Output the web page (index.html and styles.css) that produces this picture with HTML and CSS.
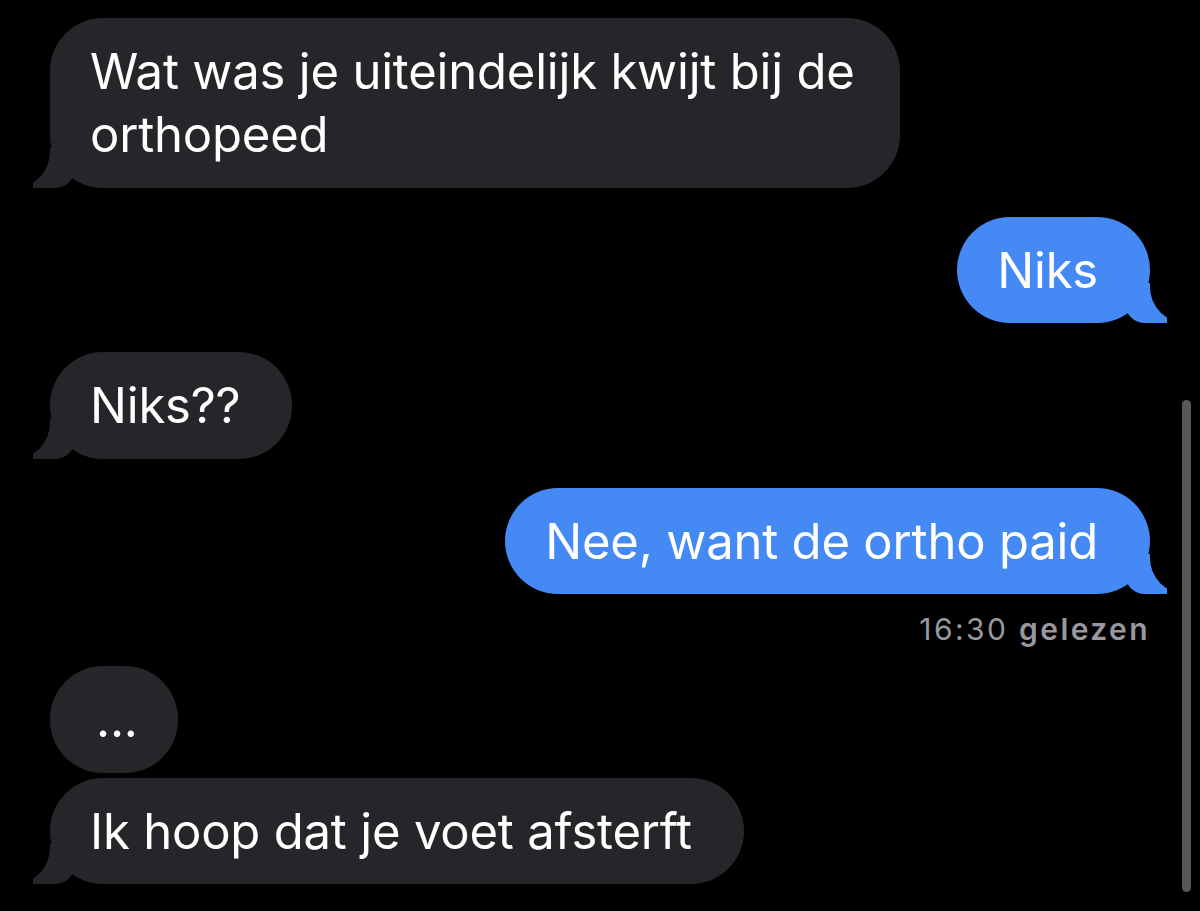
FILE: index.html
```html
<!DOCTYPE html>
<html lang="nl">
<head>
    <meta charset="UTF-8">
    <meta name="viewport" content="width=device-width, initial-scale=1.0">
    <title>Berichten</title>
    <link rel="stylesheet" href="styles.css">
</head>
<body>
    <div class="chat">
        <div class="bubble received first multi">Wat was je uiteindelijk kwijt bij de orthopeed</div>

        <div class="bubble sent">Niks</div>

        <div class="bubble received">Niks??</div>

        <div class="bubble sent">Nee, want de ortho paid</div>
        <div class="receipt">16:30 <b>gelezen</b></div>

        <div class="bubble received no-tail dots">...</div>
        <div class="bubble received close">Ik hoop dat je voet afsterft</div>
    </div>

    <div class="scrollbar"></div>
</body>
</html>
```

FILE: styles.css
```css
body {
    margin: 0;
    padding: 0;
    background-color: #000;
    font-family: Inter, "Noto Sans", sans-serif;
    color: #fff;
    height: 911px;
    overflow: hidden;
}

.chat {
    display: flex;
    flex-direction: column;
    padding: 18px 50px 0 50px;
}

.bubble {
    position: relative;
    box-sizing: border-box;
    max-width: 850px;
    padding: 22px 52px 21.5px 40px;
    border-radius: 53px;
    font-size: 49px;
    line-height: 63px;
    letter-spacing: -0.2px;
    margin-top: 29px;
}

.bubble.multi {
    padding-right: 38px;
}

.bubble.first {
    margin-top: 0;
}

.bubble.close {
    margin-top: 5px;
}

.received {
    align-self: flex-start;
    background-color: #262529;
}

.sent {
    align-self: flex-end;
    background-color: #4589f4;
}

/* tails */
.bubble::before,
.bubble::after {
    content: "";
    position: absolute;
    bottom: 0;
    height: 40px;
}

.received::before {
    left: -17px;
    width: 42px;
    background-color: #262529;
    border-bottom-right-radius: 20px;
}

.received::after {
    left: -36px;
    width: 36px;
    background-color: #000;
    border-bottom-right-radius: 36px;
}

.sent::before {
    right: -17px;
    width: 42px;
    background-color: #4589f4;
    border-bottom-left-radius: 20px;
}

.sent::after {
    right: -36px;
    width: 36px;
    background-color: #000;
    border-bottom-left-radius: 36px;
}

.no-tail::before,
.no-tail::after {
    display: none;
}

.dots {
    padding-left: 46px;
    padding-right: 40px;
    margin-top: 20px;
}

.receipt {
    align-self: flex-end;
    margin-top: 18px;
    font-size: 30px;
    line-height: 34px;
    letter-spacing: 2.4px;
    color: #98989e;
}

.receipt b {
    font-weight: 600;
}

.scrollbar {
    position: absolute;
    top: 400px;
    right: 9px;
    width: 9px;
    height: 492px;
    border-radius: 5px;
    background-color: #58585b;
}
```
